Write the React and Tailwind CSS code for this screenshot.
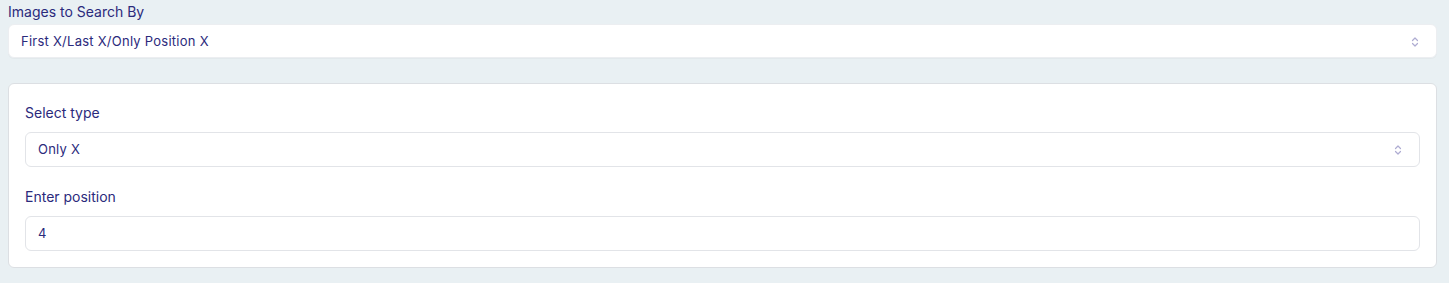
import React from "react";

const Chevrons = () => (
  <svg width="8" height="12" viewBox="0 0 8 12" fill="none" className="shrink-0">
    <path d="M1.5 4.5L4 2l2.5 2.5M1.5 7.5L4 10l2.5-2.5" stroke="#aeacd2" strokeWidth="1.2" strokeLinecap="round" strokeLinejoin="round" />
  </svg>
);

const Field = ({ value, select, className = "" }) => (
  <div
    className={`flex items-center justify-between bg-white border border-[#e2e4e8] rounded-[6px] pl-[12px] pr-[17px] text-[13px] tracking-[0.25px] text-[#2b2a7c] ${className}`}
  >
    <span>{value}</span>
    {select && <Chevrons />}
  </div>
);

export default function App() {
  return (
    <div
      className="min-h-[283px] bg-[#e9f0f3] pl-2 pr-3 pt-[4px]"
      style={{ fontFamily: "Inter, 'Noto Sans', sans-serif" }}
    >
      <label className="block text-[14px] leading-[16px] text-[#2b2a7c]">Images to Search By</label>
      <Field value="First X/Last X/Only Position X" select className="mt-[4px] h-[34px] pt-[2px] border-[#eceef1] shadow-[0_1px_1px_rgba(0,0,0,0.03)]" />

      <div className="mt-[25px] bg-white border border-[#dcdfe3] rounded-[6px] px-4 pt-[21px] pb-[16px]">
        <label className="block text-[14px] leading-[16px] text-[#2b2a7c]">Select type</label>
        <Field value="Only X" select className="mt-[11px] h-[35px] pt-[1px]" />
        <label className="block mt-[22px] text-[14px] leading-[16px] text-[#2b2a7c]">Enter position</label>
        <Field value="4" className="mt-[11px] h-[35px] pt-[1px]" />
      </div>
    </div>
  );
}
